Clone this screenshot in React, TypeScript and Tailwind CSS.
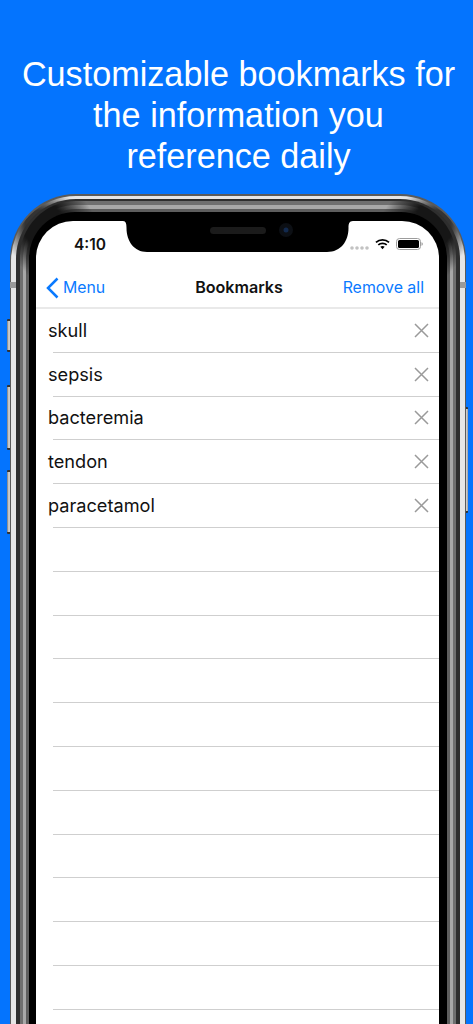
const bookmarks = ['skull', 'sepsis', 'bacteremia', 'tendon', 'paracetamol'];

// darker patches where the metal band turns the top corners
const cornerShade =
  'bg-[radial-gradient(circle_48px_at_24px_24px,#161616_45%,transparent),radial-gradient(circle_48px_at_calc(100%-24px)_24px,#161616_45%,transparent)]';

function CloseIcon() {
  return (
    <svg width="15" height="15" viewBox="0 0 15 15" fill="none" stroke="#9a9a9a" strokeWidth="1.5">
      <path d="M1 1 14 14M14 1 1 14" />
    </svg>
  );
}

function BookmarkRow({ label }: { label?: string }) {
  return (
    <div className="relative flex h-[43.8px] shrink-0 items-center justify-between pb-px pl-[12px] pr-[10px]">
      <span className="text-[18.150px] text-[#111]">{label}</span>
      {label && <CloseIcon />}
      <div className="absolute bottom-0 left-[17px] right-0 h-px bg-[#cfcfcf]" />
    </div>
  );
}

function Notch() {
  return (
    <svg width="230" height="32" viewBox="0 0 230 32" className="shrink-0">
      <path d="M0 0H230C226 0 225.500 3 225.500 7C225.500 20 218 31 204 31H24C11 31 3.500 20 3.500 7C3.500 3 3 0 0 0Z" fill="#000" />
      <rect x="87" y="6" width="56" height="7" rx="3.500" fill="#1b1b1b" />
      <circle cx="163" cy="9" r="7" fill="#0c0f14" />
      <circle cx="163" cy="9" r="2.500" fill="#12294d" />
    </svg>
  );
}

function StatusIcons() {
  return (
    <div className="-ml-[3px] flex items-start gap-[6px] pt-[17px]">
      <svg width="19" height="4" viewBox="0 0 19 4" className="mt-[8px]" fill="#c2c2c2">
        <circle cx="2" cy="2" r="1.800" />
        <circle cx="7" cy="2" r="1.800" />
        <circle cx="12" cy="2" r="1.800" />
        <circle cx="17" cy="2" r="1.800" />
      </svg>
      <svg width="15" height="12" viewBox="0 0 16 12" fill="none" stroke="#000" strokeWidth="1.800">
        <path d="M1 4.300C5 .6 11 .6 15 4.300" />
        <path d="M3.500 6.900C6 4.700 10 4.700 12.500 6.900" />
        <path d="M8 11.500 5.700 9C7 8 9 8 10.300 9Z" fill="#000" stroke="none" />
      </svg>
      <svg width="27" height="12" viewBox="0 0 27 12">
        <rect x=".5" y=".5" width="24" height="11" rx="3" fill="none" stroke="#9c9c9c" />
        <rect x="2" y="2" width="21" height="8" rx="1.500" fill="#000" />
        <path d="M25.500 4.200c1 .3 1.300 1 1.300 1.800s-.3 1.500-1.300 1.800Z" fill="#9c9c9c" />
      </svg>
    </div>
  );
}

function SideButton({ className }: { className: string }) {
  return (
    <div
      className={`absolute w-[4px] rounded-[1px] border-y-2 border-y-[#333] bg-[linear-gradient(90deg,#777,#ddd,#999)] ${className}`}
    />
  );
}

export default function App() {
  return (
    <div className="relative flex h-[1024px] w-[473px] flex-col overflow-hidden bg-[#0474fe] font-['Liberation_Sans',sans-serif]">
      <h1 className="h-[194px] shrink-0 pl-[4px] pt-[54px] text-center text-[34.200px] font-normal leading-[41px] text-white">
        Customizable bookmarks for
        <br />
        the information you
        <br />
        reference daily
      </h1>

      <SideButton className="left-[7px] top-[319px] h-[33px]" />
      <SideButton className="left-[7px] top-[385px] h-[65px]" />
      <SideButton className="left-[7px] top-[470px] h-[64px]" />
      <SideButton className="left-[464px] top-[407px] h-[106px]" />

      {/* phone frame, ring by ring */}
      <div className="relative ml-[10px] flex w-[456px] flex-1 flex-col rounded-t-[66px] bg-[#5a5a5a] px-px pt-[2px]">
        <div className="absolute left-0 top-[88px] h-[6px] w-[6px] bg-[#9a9a9a]" />
        <div className="absolute right-0 top-[88px] h-[6px] w-[6px] bg-[#9a9a9a]" />
        <div className="flex flex-1 flex-col rounded-t-[65px] bg-[#e6e6e6] bg-[radial-gradient(circle_40px_at_30px_30px,#333_40%,transparent),radial-gradient(circle_40px_at_calc(100%-30px)_30px,#333_40%,transparent)] px-[5px] pt-[3px]">
          <div className="flex flex-1 flex-col rounded-t-[60px] bg-[#2e2e2e] px-[4px] pt-[2px]">
            <div className={`flex flex-1 flex-col rounded-t-[56px] bg-[#6f6f6f] ${cornerShade} px-[3px] pt-[4px]`}>
              <div className={`flex flex-1 flex-col rounded-t-[53px] bg-[#a8a8a8] ${cornerShade} px-[3px] pt-[4px]`}>
                <div className={`flex flex-1 flex-col rounded-t-[50px] bg-[#5e5e5e] ${cornerShade} px-[3px] pt-[3px]`}>
                  <div className="flex flex-1 flex-col rounded-t-[46px] bg-black pl-[7px] pr-[8px] pt-[9px]">
                    <div className="flex flex-1 flex-col overflow-hidden rounded-t-[37px] bg-white font-['Inter',sans-serif]">
                      <div className="flex h-[44px] shrink-0 items-start">
                        <div className="w-[87px] pl-[38px] pt-[15px] text-[15.500px] font-semibold leading-[18px] text-[#111]">
                          4:10
                        </div>
                        <Notch />
                        <StatusIcons />
                      </div>

                      <nav className="flex h-[44px] shrink-0 items-center justify-between border-b-2 border-b-[#e9e9e9] pl-[10px] pr-[15px] pt-[3px]">
                        <div className="flex w-[118px] items-center gap-[4px] text-[15.800px] text-[#0a7aff]">
                          <svg width="13" height="22" viewBox="0 0 13 22" fill="none" stroke="#0a7aff" strokeWidth="2.500">
                            <path d="M11.500 1.500 2 11l9.500 9.500" />
                          </svg>
                          Menu
                        </div>
                        <div className="text-[16.100px] font-semibold text-[#111]">Bookmarks</div>
                        <div className="w-[110px] text-right text-[15.900px] text-[#0a7aff]">Remove all</div>
                      </nav>

                      {bookmarks.map((b) => (
                        <BookmarkRow key={b} label={b} />
                      ))}
                      {Array.from({ length: 12 }).map((_, i) => (
                        <BookmarkRow key={i} />
                      ))}
                    </div>
                  </div>
                </div>
              </div>
            </div>
          </div>
        </div>
      </div>
    </div>
  );
}
